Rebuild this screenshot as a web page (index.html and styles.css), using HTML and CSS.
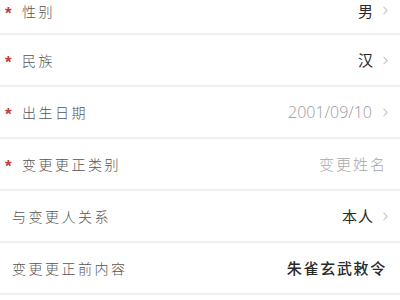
FILE: index.html
```html
<!DOCTYPE html>
<html lang="zh">
<head>
<meta charset="utf-8">
<link rel="stylesheet" href="styles.css">
</head>
<body>
<div class="list">
  <div class="row">
    <span class="star">*</span><span class="label">性别</span>
    <span class="value">男</span>
    <svg class="chev" viewBox="0 0 6 10" width="5" height="9"><polyline points="1,1 5,5 1,9" /></svg>
  </div>
  <div class="row">
    <span class="star">*</span><span class="label">民族</span>
    <span class="value">汉</span>
    <svg class="chev" viewBox="0 0 6 10" width="5" height="9"><polyline points="1,1 5,5 1,9" /></svg>
  </div>
  <div class="row">
    <span class="star">*</span><span class="label">出生日期</span>
    <span class="value date">2001/09/10</span>
    <svg class="chev" viewBox="0 0 6 10" width="5" height="9"><polyline points="1,1 5,5 1,9" /></svg>
  </div>
  <div class="row">
    <span class="star">*</span><span class="label">变更更正类别</span>
    <span class="value placeholder">变更姓名</span>
  </div>
  <div class="row">
    <span class="label plain">与变更人关系</span>
    <span class="value">本人</span>
    <svg class="chev" viewBox="0 0 6 10" width="5" height="9"><polyline points="1,1 5,5 1,9" /></svg>
  </div>
  <div class="row">
    <span class="label plain">变更更正前内容</span>
    <span class="value strong">朱雀玄武敕令</span>
  </div>
</div>
</body>
</html>
```
FILE: styles.css
```css
html, body {
  margin: 0;
  padding: 0;
  background: #ffffff;
  overflow: hidden;
}
body {
  width: 400px;
  height: 300px;
  font-family: "Noto Sans CJK SC", "Noto Sans", sans-serif;
}
.list {
  margin-top: -16px;
}
.row {
  display: flex;
  align-items: center;
  height: 50px;
  padding: 0 12px 0 5px;
  border-bottom: 2px solid #f0f0f0;
  line-height: 18px;
}
.row:first-child {
  height: 45px;
  padding-top: 4px;
}
.star {
  width: 8px;
  margin-right: 9px;
  color: #c43c3c;
  font-family: "Liberation Sans", sans-serif;
  font-weight: bold;
  font-size: 17px;
  line-height: 1;
  padding-top: 5px;
}
.label {
  color: #555555;
  font-size: 14px;
  letter-spacing: 2.5px;
  font-weight: 300;
}
.label.plain {
  margin-left: 7px;
}
.value {
  margin-left: auto;
  color: #2a2a2a;
  font-size: 15px;
  letter-spacing: 1px;
}
.value.date {
  color: #9a9a9a;
  font-family: "Open Sans", sans-serif;
  font-size: 16px;
  letter-spacing: 0;
  font-weight: 300;
  margin-right: 2px;
}
.value.placeholder {
  color: #a8a8a8;
  letter-spacing: 2px;
  font-weight: 300;
  margin-right: 1px;
}
.value.strong {
  font-size: 15px;
  letter-spacing: 1.7px;
  font-weight: 500;
  margin-right: 1px;
}
.chev {
  margin-left: 9px;
  flex: none;
}
.chev polyline {
  fill: none;
  stroke: #c8c8c8;
  stroke-width: 1.3;
  stroke-linecap: round;
  stroke-linejoin: round;
}
```
